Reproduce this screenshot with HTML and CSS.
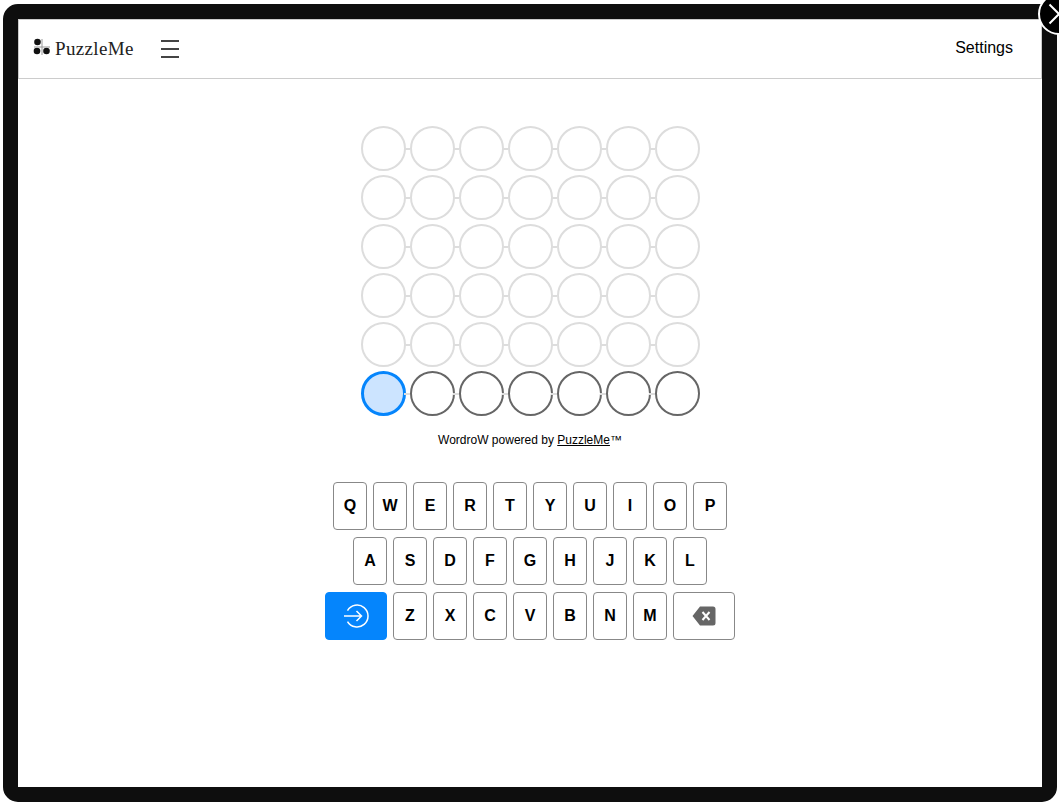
FILE: index.html
```html
<!DOCTYPE html>
<html lang="en">
<head>
<meta charset="utf-8">
<title>WordroW</title>
<link rel="stylesheet" href="styles.css">
</head>
<body>
<div class="frame">
  <button class="close" aria-label="Close">
    <svg width="24" height="24" viewBox="0 0 24 24"><path d="M2.5 2.5 21.500 21.500M21.500 2.500 2.500 21.500" stroke="#fff" stroke-width="2" fill="none"/></svg>
  </button>
  <div class="panel">
    <header class="topbar">
      <div class="brand">
        <svg class="brand-mark" width="18" height="18" viewBox="0 0 18 18">
          <circle cx="4.500" cy="4" r="3.300" fill="#111"/>
          <circle cx="4" cy="13" r="3.300" fill="#111"/>
          <circle cx="13.500" cy="13" r="3.300" fill="#111"/>
          <path d="M9 1v16M1 9h16" stroke="#999" stroke-width="1" fill="none"/>
        </svg>
        <span class="brand-name">PuzzleMe</span>
      </div>
      <div class="burger"><span></span><span></span><span></span></div>
      <div class="settings">Settings</div>
    </header>
    <main class="game">
      <div class="board">
        <div class="row"><i class="cell"></i><i class="cell"></i><i class="cell"></i><i class="cell"></i><i class="cell"></i><i class="cell"></i><i class="cell"></i></div>
        <div class="row"><i class="cell"></i><i class="cell"></i><i class="cell"></i><i class="cell"></i><i class="cell"></i><i class="cell"></i><i class="cell"></i></div>
        <div class="row"><i class="cell"></i><i class="cell"></i><i class="cell"></i><i class="cell"></i><i class="cell"></i><i class="cell"></i><i class="cell"></i></div>
        <div class="row"><i class="cell"></i><i class="cell"></i><i class="cell"></i><i class="cell"></i><i class="cell"></i><i class="cell"></i><i class="cell"></i></div>
        <div class="row"><i class="cell"></i><i class="cell"></i><i class="cell"></i><i class="cell"></i><i class="cell"></i><i class="cell"></i><i class="cell"></i></div>
        <div class="row row-active"><i class="cell cell-current"></i><i class="cell"></i><i class="cell"></i><i class="cell"></i><i class="cell"></i><i class="cell"></i><i class="cell"></i></div>
      </div>
      <p class="credit">WordroW powered by <a href="#">PuzzleMe</a>™</p>
      <div class="keyboard">
        <div class="keys"><b class="key">Q</b><b class="key">W</b><b class="key">E</b><b class="key">R</b><b class="key">T</b><b class="key">Y</b><b class="key">U</b><b class="key">I</b><b class="key">O</b><b class="key">P</b></div>
        <div class="keys"><b class="key">A</b><b class="key">S</b><b class="key">D</b><b class="key">F</b><b class="key">G</b><b class="key">H</b><b class="key">J</b><b class="key">K</b><b class="key">L</b></div>
        <div class="keys">
          <b class="key key-wide key-enter">
            <svg width="26" height="26" viewBox="0 0 26 26" fill="none" stroke="#fff" stroke-width="1.500"><path d="M4.500 7.500A11 11 0 1 1 4.500 18.500"/><path d="M1 13h17M13.500 8l5 5-5 5"/></svg>
          </b>
          <b class="key">Z</b><b class="key">X</b><b class="key">C</b><b class="key">V</b><b class="key">B</b><b class="key">N</b><b class="key">M</b>
          <b class="key key-wide">
            <svg width="24" height="20" viewBox="0 0 24 20"><path d="M8 .5h13a2.500 2.500 0 0 1 2.500 2.500v14a2.500 2.500 0 0 1-2.500 2.500H8L.5 10z" fill="#666"/><path d="M10.500 6l7 8M17.500 6l-7 8" stroke="#fff" stroke-width="2" fill="none"/></svg>
          </b>
        </div>
      </div>
    </main>
  </div>
</div>
</body>
</html>
```
FILE: styles.css
```css
* { box-sizing: border-box; }
html, body { height: 100%; margin: 0; overflow: hidden; background: #fff; }
body { padding: 4px 2px 1px 3px; font-family: "Liberation Sans", Arial, sans-serif; color: #000; }
.frame {
  position: relative;
  height: 100%;
  border: 15px solid #0e0e0e;
  border-radius: 15px;
  background: #fff;
}
.close {
  position: absolute;
  top: -26px;
  right: -38px;
  width: 42px;
  height: 42px;
  display: flex;
  align-items: center;
  justify-content: center;
  padding: 0;
  border: 2px solid #fff;
  border-radius: 50%;
  background: #000;
}
.panel { height: 100%; }
.topbar {
  display: flex;
  align-items: center;
  height: 60px;
  padding: 0 28px 0 14px;
  border: 1px solid #ccc;
  border-width: 1px 1px 1px 1px;
}
.brand { display: flex; align-items: center; gap: 4px; }
.brand-mark { margin-top: -4px; }
.brand-name { font-family: "Liberation Serif", serif; font-size: 19px; letter-spacing: .35px; color: #222; }
.burger { display: flex; flex-direction: column; gap: 6px; width: 18px; margin-left: 27px; }
.burger span { height: 2px; background: #444; }
.settings { margin-left: auto; font-size: 16px; margin-top: -2px; }
.game { display: flex; flex-direction: column; align-items: center; padding-top: 47px; }
.board { display: flex; flex-direction: column; gap: 4px; }
.row { display: flex; gap: 4px; }
.cell {
  position: relative;
  display: block;
  width: 45px;
  height: 45px;
  border: 2px solid #ddd;
  border-radius: 50%;
  background: #fff;
}
.cell + .cell::before {
  content: "";
  position: absolute;
  top: 50%;
  left: -8px;
  width: 6px;
  height: 2px;
  margin-top: -1px;
  background: #ddd;
}
.row-active .cell { border-color: #666; }
.row-active .cell-current { border: 3px solid #0585fc; background: #cce4ff; }
.credit { margin: 16px 0 0; font-size: 12px; line-height: 16px; }
.credit a { color: #000; text-decoration: underline; }
.keyboard { display: flex; flex-direction: column; align-items: center; gap: 7px; margin-top: 34px; }
.keys { display: flex; gap: 6px; }
.key {
  display: flex;
  align-items: center;
  justify-content: center;
  width: 34px;
  height: 48px;
  border: 1px solid #888;
  border-radius: 4px;
  font-size: 16px;
  font-weight: 700;
  background: #fff;
}
.key-wide { width: 62px; }
.key-enter { border-color: #0585fc; background: #0585fc; }
```
